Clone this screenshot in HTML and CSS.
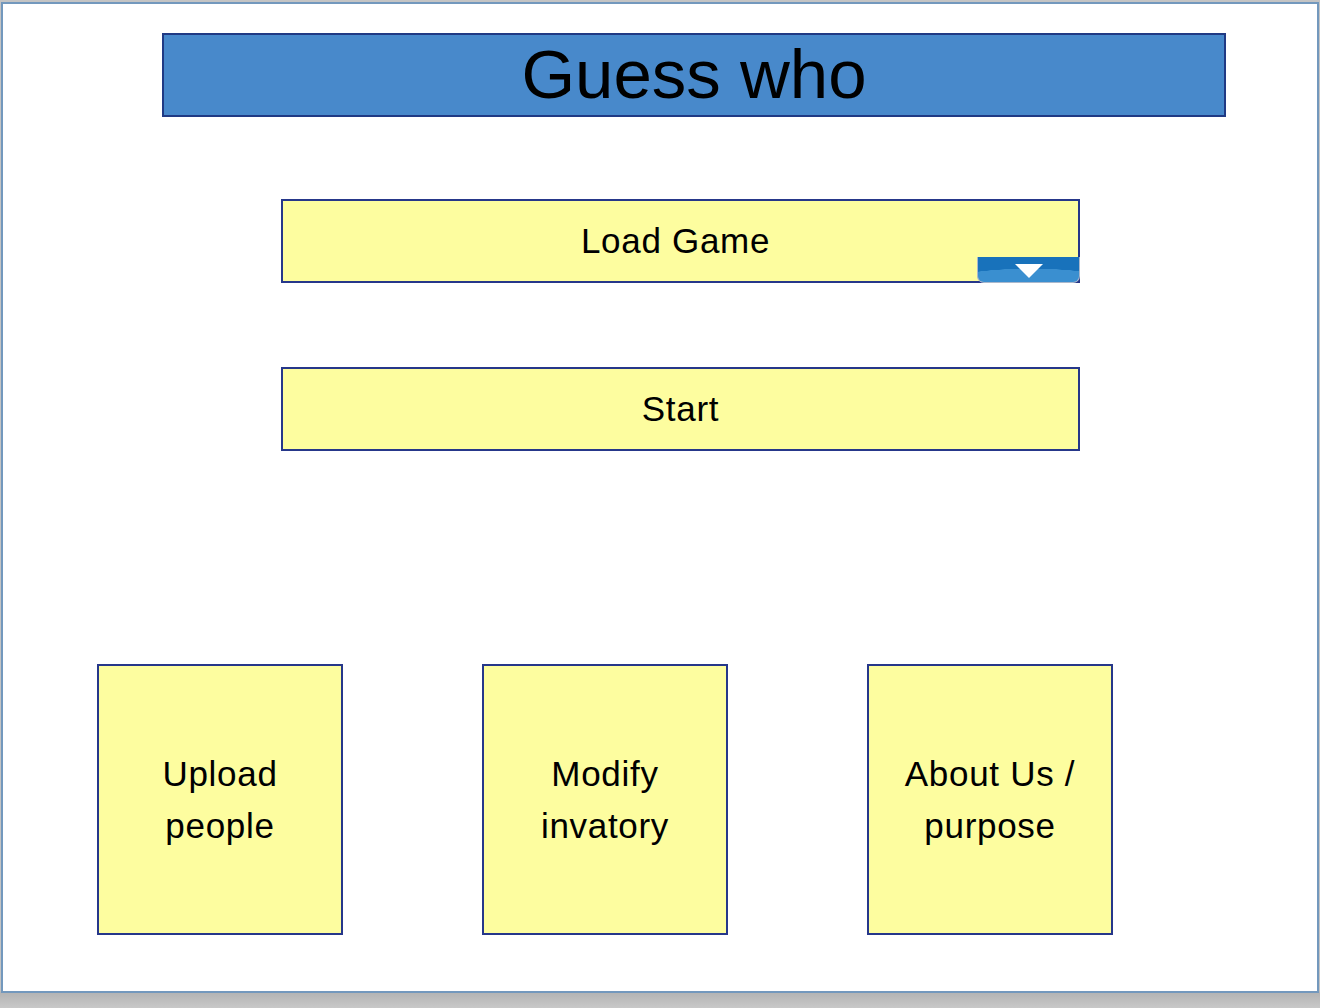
FILE: index.html
```html
<!DOCTYPE html>
<html>
<head>
<meta charset="utf-8">
<link rel="stylesheet" href="styles.css">
</head>
<body>
<div class="slide">
  <div class="title">Guess who</div>
  <div class="wide load">Load Game
    <div class="drop"><svg width="30" height="16" viewBox="0 0 30 16"><polygon points="1,1 29,1 15,15" fill="#fff"/></svg></div>
  </div>
  <div class="wide start">Start</div>
  <div class="tiles">
    <div class="tile">Upload<br>people</div>
    <div class="tile">Modify<br>invatory</div>
    <div class="tile">About Us /<br>purpose</div>
  </div>
</div>
</body>
</html>
```
FILE: styles.css
```css
html, body { margin: 0; padding: 0; }
body {
  width: 1320px;
  height: 1008px;
  background: linear-gradient(#c4c4c4 0, #c4c4c4 990px, #b4b4b4 993px, #c8c8c8 1008px);
  font-family: "Liberation Sans", Arial, sans-serif;
  overflow: hidden;
}
.slide {
  box-sizing: border-box;
  margin: 2px 0 0 1px;
  width: 1318px;
  height: 991px;
  border: 2px solid #7398bd;
  background: #fff;
  display: flex;
  flex-direction: column;
}
.title {
  box-sizing: border-box;
  margin: 29px 0 0 159px;
  width: 1064px;
  height: 84px;
  background: #4889cb;
  border: 2px solid #203a84;
  color: #000;
  font-size: 69px;
  line-height: 80px;
  text-align: center;
}
.wide {
  box-sizing: border-box;
  margin-left: 278px;
  width: 799px;
  height: 84px;
  background: #fdfd9f;
  border: 2px solid #26378a;
  font-size: 35px;
  letter-spacing: 0.7px;
  display: flex;
  align-items: center;
  justify-content: center;
  position: relative;
}
.load { margin-top: 82px; padding-right: 10px; }
.start { margin-top: 84px; }
.drop {
  position: absolute;
  right: -2px;
  bottom: -2px;
  width: 103px;
  height: 26px;
  box-sizing: border-box;
  border-radius: 0 0 7px 7px;
  border: 1px solid #aab8cc;
  border-top: none;
  background:
    radial-gradient(ellipse 90px 16px at 52% 110%, #3a8fd0 0, #3a8fd0 98%, transparent 100%),
    #1872bb;
  display: flex;
  justify-content: center;
  padding-top: 6px;
}
.tiles {
  display: flex;
  gap: 139px;
  margin: 213px 0 0 94px;
}
.tile {
  box-sizing: border-box;
  width: 246px;
  height: 271px;
  background: #fdfd9f;
  border: 2px solid #26378a;
  font-size: 35px;
  letter-spacing: 0.7px;
  line-height: 52px;
  text-align: center;
  display: flex;
  align-items: center;
  justify-content: center;
}
```
